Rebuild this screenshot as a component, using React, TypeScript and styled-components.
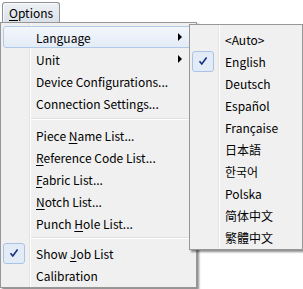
import React from "react";
import styled, { createGlobalStyle } from "styled-components";

const Global = createGlobalStyle`
  html, body { margin: 0; padding: 0; background: #ffffff; }
  body {
    width: 303px; height: 289px; overflow: hidden;
    font-family: "Noto Sans CJK SC", "Noto Sans", sans-serif;
    font-size: 12px; color: #000;
  }
`;

const Page = styled.div`
  position: relative;
  width: 303px;
  height: 289px;
`;

const MenuBar = styled.div`
  display: flex;
  height: 22px;
  padding: 2px 0 0 2px;
  box-sizing: border-box;
`;

const BarButton = styled.div`
  display: flex;
  align-items: center;
  height: 20px;
  box-sizing: border-box;
  padding: 0 6px 0 6px;
  border: 1px solid #8d9196;
  border-bottom: none;
  border-radius: 3px 3px 0 0;
  background: linear-gradient(#eef1f5, #dbe1e9);
  box-shadow: inset 1px 1px 0 #f8fafc;
  line-height: 1;
`;

const DropMenu = styled.div<{ $left: number; $top: number; $width: number }>`
  position: absolute;
  left: ${(p) => p.$left}px;
  top: ${(p) => p.$top}px;
  width: ${(p) => p.$width}px;
  box-sizing: border-box;
  display: flex;
  flex-direction: column;
  border: 1px solid #979797;
  padding: 3px 2px 1px 2px;
  background: linear-gradient(
    to right,
    #f0f0f0 28px,
    #e2e3e3 28px,
    #e2e3e3 29px,
    #ffffff 29px,
    #ffffff 30px,
    #f0f0f0 30px
  );
  box-shadow: 2px 2px 2px rgba(0, 0, 0, 0.45);
`;

const Item = styled.div<{ $hot?: boolean }>`
  display: flex;
  align-items: center;
  height: 22px;
  box-sizing: border-box;
  border: 1px solid ${(p) => (p.$hot ? "#b1c9e8" : "transparent")};
  border-radius: 3px;
  background: ${(p) =>
    p.$hot ? "linear-gradient(#f3f7fc, #e3ebf6)" : "transparent"};
  white-space: nowrap;
  line-height: 1;
`;

const Gutter = styled.div`
  width: 32px;
  flex: none;
  align-self: stretch;
  display: flex;
  align-items: center;
`;

const Label = styled.span`
  flex: 1;
  padding-top: 1px;
`;

const U = styled.span`
  text-decoration: underline;
  text-underline-offset: 2px;
`;

const Separator = styled.div<{ $h: number }>`
  height: ${(p) => p.$h}px;
  display: flex;
  align-items: center;
  padding-left: 28px;
  &::after {
    content: "";
    flex: 1;
    height: 1px;
    border-top: 1px solid #e0e0e0;
    background: #ffffff;
  }
`;

const CheckBox = styled.div`
  margin-left: -1px;
  width: 22px;
  height: 21px;
  box-sizing: border-box;
  border: 1px solid #a9c3e6;
  border-radius: 3px;
  background: #e3ebf7;
  display: flex;
  align-items: center;
  justify-content: center;
`;

const Arrow = styled.div`
  flex: none;
  margin-right: 11px;
  width: 0;
  height: 0;
  border-top: 4px solid transparent;
  border-bottom: 4px solid transparent;
  border-left: 4px solid #000;
`;

const Check = () => (
  <svg width="10" height="10" viewBox="0 0 10 10">
    <path d="M1.5 5.2 L3.8 8 L8.6 1.5" fill="none" stroke="#15307f" strokeWidth="1.6" />
  </svg>
);

const MenuItem = ({
  children,
  hot,
  checked,
  sub,
}: {
  children: React.ReactNode;
  hot?: boolean;
  checked?: boolean;
  sub?: boolean;
}) => (
  <Item $hot={hot}>
    <Gutter>
      {checked && (
        <CheckBox>
          <Check />
        </CheckBox>
      )}
    </Gutter>
    <Label>{children}</Label>
    {sub && <Arrow />}
  </Item>
);

const langs = [
  "<Auto>",
  "English",
  "Deutsch",
  "Español",
  "Française",
  "日本語",
  "한국어",
  "Polska",
  "简体中文",
  "繁體中文",
];

export default function App() {
  return (
    <Page>
      <Global />
      <MenuBar>
        <BarButton>
          <span>
            <U>O</U>ptions
          </span>
        </BarButton>
      </MenuBar>
      <DropMenu $left={0} $top={22} $width={197}>
        <MenuItem hot sub>
          Language
        </MenuItem>
        <MenuItem sub>Unit</MenuItem>
        <MenuItem>Device Configurations...</MenuItem>
        <MenuItem>Connection Settings...</MenuItem>
        <Separator $h={10} />
        <MenuItem>
          Piece <U>N</U>ame List...
        </MenuItem>
        <MenuItem>
          <U>R</U>eference Code List...
        </MenuItem>
        <MenuItem>
          <U>F</U>abric List...
        </MenuItem>
        <MenuItem>
          <U>N</U>otch List...
        </MenuItem>
        <MenuItem>
          Punch <U>H</U>ole List...
        </MenuItem>
        <Separator $h={8} />
        <MenuItem checked>
          Show <U>J</U>ob List
        </MenuItem>
        <MenuItem>Calibration</MenuItem>
      </DropMenu>
      <DropMenu $left={189} $top={24} $width={114}>
        {langs.map((l, i) => (
          <MenuItem key={l} checked={i === 1}>
            {l}
          </MenuItem>
        ))}
      </DropMenu>
    </Page>
  );
}
